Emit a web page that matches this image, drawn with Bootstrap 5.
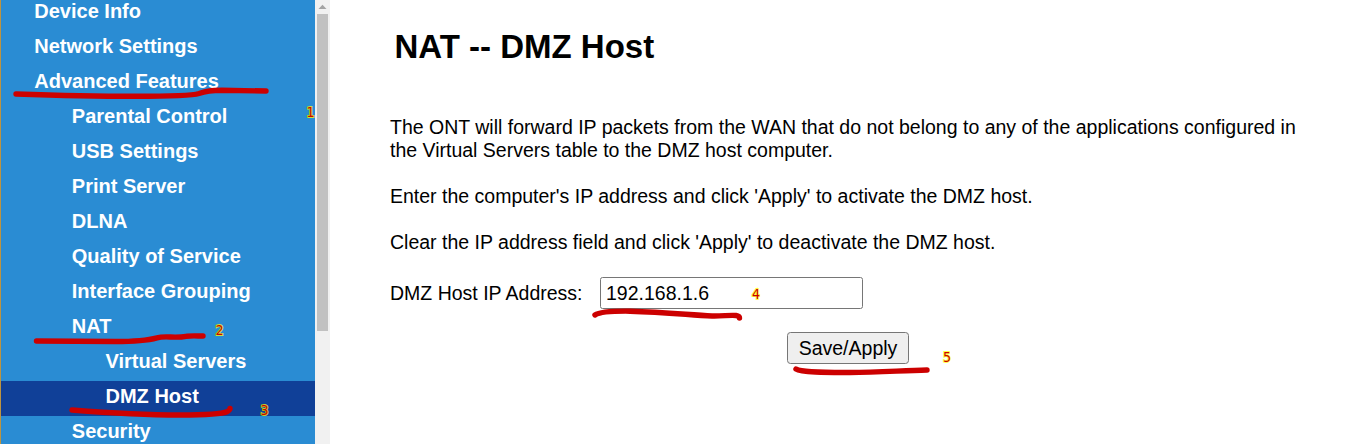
<!DOCTYPE html>
<html lang="en">
<head>
<meta charset="utf-8">
<title>NAT -- DMZ Host</title>
<link href="https://cdn.jsdelivr.net/npm/bootstrap@5.3.0/dist/css/bootstrap.min.css" rel="stylesheet">
<style>
body{font-family:"Liberation Sans",Arial,sans-serif;font-size:19.5px;line-height:23px;color:#000;background:#fff}
.screen{height:444px}
.side-menu{width:315px;background:#2a8cd3;border-left:1px solid #bd9440}
.menu-list{margin-top:-4px}
.side-menu .nav-link{height:35px;padding:4px 0 0 33.3px;font-weight:700;font-size:20px;line-height:23px;color:#fff;white-space:nowrap}
.side-menu .lvl-2{padding-left:70.8px}
.side-menu .lvl-3{padding-left:104.5px}
.side-menu .nav-link.active{background:#104098}
.scroll-track{width:15px;background:#f1f1f1;padding:0 2px}
.scroll-arrow{height:14px}
.scroll-thumb{height:317px;width:11px;background:#c1c1c1}
.main-pane{padding:28px 0 0 60px}
h1{font-size:33px;line-height:38px;font-weight:700;margin:0 0 50px 4.5px}
.main-pane p{margin:0 0 23px;white-space:nowrap}
.ip-row{margin-top:1px}
.ip-row label{width:210px}
.ip-row input{width:263px;height:32px;padding:0 5px;border:1px solid #767676;border-radius:2.5px;font-size:19.5px;line-height:23px;color:#000;background:#fff}
.apply-btn{margin:23px 0 0 397px;width:122px;height:32px;padding:0;border:1px solid #767676;border-radius:3.5px;background:#efefef;font-size:19.5px;line-height:23px;color:#000}
.marks{left:0;top:0;pointer-events:none}
.marks path{fill:none;stroke:#c00;stroke-width:5.4;stroke-linecap:round;stroke-linejoin:round}
.marks text{font-family:"DejaVu Sans Condensed","DejaVu Sans",sans-serif;font-stretch:condensed;font-size:14px;fill:#c00;stroke:#ff0;stroke-width:1.8;stroke-opacity:.75;paint-order:stroke}
</style>
</head>
<body>
<div class="screen d-flex position-relative overflow-hidden">
  <aside class="side-menu flex-shrink-0 overflow-hidden">
    <nav class="menu-list nav flex-column flex-nowrap">
      <a class="nav-link">Device Info</a>
      <a class="nav-link">Network Settings</a>
      <a class="nav-link">Advanced Features</a>
      <a class="nav-link lvl-2">Parental Control</a>
      <a class="nav-link lvl-2">USB Settings</a>
      <a class="nav-link lvl-2">Print Server</a>
      <a class="nav-link lvl-2">DLNA</a>
      <a class="nav-link lvl-2">Quality of Service</a>
      <a class="nav-link lvl-2">Interface Grouping</a>
      <a class="nav-link lvl-2">NAT</a>
      <a class="nav-link lvl-3">Virtual Servers</a>
      <a class="nav-link lvl-3 active">DMZ Host</a>
      <a class="nav-link lvl-2">Security</a>
    </nav>
  </aside>
  <div class="scroll-track flex-shrink-0">
    <svg class="scroll-arrow d-block" width="11" height="14"><path d="M1.500 9L5.500 4.800L9.500 9Z" fill="#a3a3a3"/></svg>
    <div class="scroll-thumb"></div>
  </div>
  <main class="main-pane flex-grow-1">
    <h1>NAT -- DMZ Host</h1>
    <p>The ONT will forward IP packets from the WAN that do not belong to any of the applications configured in<br>the Virtual Servers table to the DMZ host computer.</p>
    <p>Enter the computer's IP address and click 'Apply' to activate the DMZ host.</p>
    <p>Clear the IP address field and click 'Apply' to deactivate the DMZ host.</p>
    <div class="ip-row d-flex align-items-center">
      <label for="ip">DMZ Host IP Address:</label>
      <input id="ip" type="text" value="192.168.1.6">
    </div>
    <button class="apply-btn btn d-block" type="button">Save/Apply</button>
  </main>
  <svg class="marks position-absolute" width="1365" height="444" viewBox="0 0 1365 444">
    <path d="M16 94C60 95.500 95 96.300 135 96.300C165 96.300 190 96.300 199 93.500C207 90.700 211 90.400 222 90.300L266 91"/>
    <path d="M36.500 341L115 341.500C135 341.500 149 340 157 337.800C165 335.500 175 338.500 186 336.300C190 335.600 197 336 203 336"/>
    <path d="M72 410C110 413 145 415 180 415C205 415 222 414 227.500 411.500Q230 410 230 408.500"/>
    <path d="M595 315C600 311.500 612 311 630 311.200C665 312 690 315 712 316C722 316.300 730 314.800 736 315.500Q739.500 316 739.500 318"/>
    <path d="M796 369C801 372.500 825 372.600 850 372.500C880 372.200 903 370.500 927 370"/>
    <text x="306.500" y="117">1</text>
    <text x="215.500" y="335">2</text>
    <text x="260.500" y="415">3</text>
    <text x="752" y="299">4</text>
    <text x="943" y="362">5</text>
  </svg>
</div>
<script src="https://cdn.jsdelivr.net/npm/bootstrap@5.3.0/dist/js/bootstrap.bundle.min.js"></script>
</body>
</html>
